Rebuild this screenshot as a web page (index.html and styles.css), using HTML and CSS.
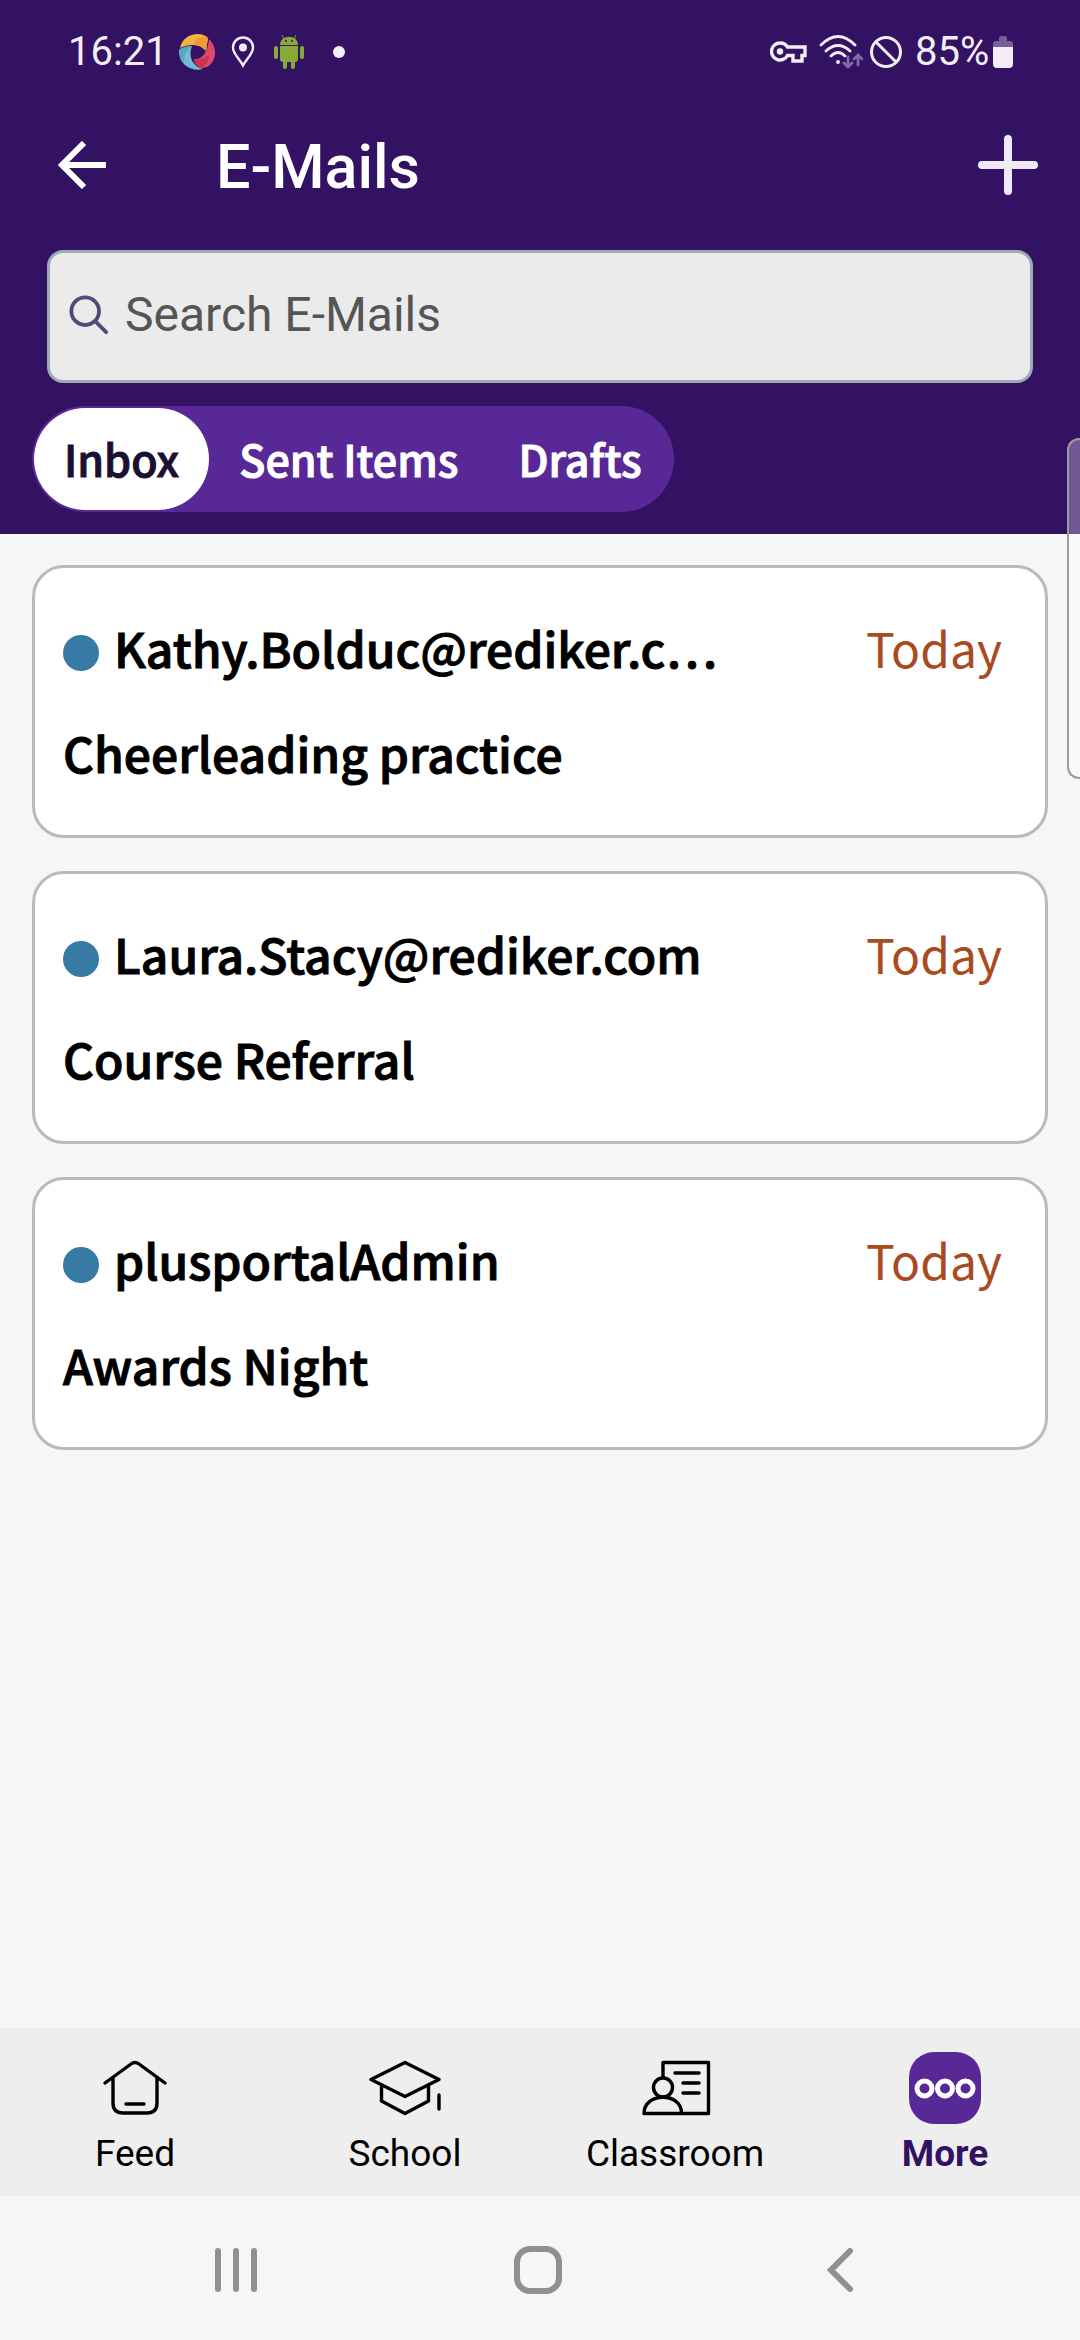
FILE: index.html
```html
<!DOCTYPE html>
<html lang="en">
<head>
<meta charset="utf-8">
<meta name="viewport" content="width=device-width, initial-scale=1">
<title>E-Mails</title>
<link rel="stylesheet" href="styles.css">
</head>
<body>
<header class="top">
  <div class="status">
    <div class="status-left">
      <span class="clock">16:21</span>
      <svg width="36" height="36" viewBox="0 0 36 36" aria-hidden="true">
        <path d="M1 14C3 5 10 0 19 0c4 0 7 1 10 4l-2 13C22 10 11 9 1 14z" fill="#f3b33d"/>
        <path d="M15 7c5-4 10-5 14-3l-2 13c-3-4-7-6-12-6z" fill="#ee9a35"/>
        <path d="M30 5c6 6 8 15 4 22-3 5-7 7-12 7-4-2-7-5-7-9 8 1 14-7 15-20z" fill="#df486b"/>
        <path d="M15 25c6 1 11-1 15-4 0 6-3 11-8 13-4-2-7-5-7-9z" fill="#c4354f"/>
        <path d="M13 12C9 22 13 32 24 35 13 38 1 31 0 19c0-2 0-3 1-4 4-2 8-3 12-3z" fill="#72bdd3"/>
        <path d="M13 12C9 15 5 21 5 28 1 24 0 20 1 15c4-2 8-3 12-3z" fill="#5aa6c1"/>
      </svg>
      <svg class="pin" width="24" height="32" viewBox="0 0 24 32" aria-hidden="true">
        <path d="M12 29.500C8 22 2 18 2 11.500a10 10 0 0 1 20 0C22 18 16 22 12 29.500z" fill="none" stroke="#f1eef5" stroke-width="2.400"/>
        <circle cx="12" cy="11.500" r="4" fill="#f1eef5"/>
      </svg>
      <svg class="droid" width="30" height="36" viewBox="0 0 30 36" aria-hidden="true" fill="#86aa35">
        <path d="M8 1l2 4M22 1l-2 4" stroke="#86aa35" stroke-width="1"/>
        <path d="M6 11C6 0 24 0 24 11z"/>
        <path d="M6 12h18v13q0 3-3 3H9q-3 0-3-3z"/>
        <rect x="0" y="12" width="4" height="13" rx="2"/><rect x="26" y="12" width="4" height="13" rx="2"/>
        <rect x="9" y="25" width="4" height="10" rx="2"/><rect x="17" y="25" width="4" height="10" rx="2"/>
        <circle cx="12" cy="7" r="1" fill="#331163"/><circle cx="18" cy="7" r="1" fill="#331163"/>
      </svg>
      <svg class="more-dot" width="12" height="12" viewBox="0 0 12 12" aria-hidden="true"><circle cx="6" cy="6" r="6" fill="#f1eef5"/></svg>
    </div>
    <div class="status-right">
      <svg width="37" height="22" viewBox="0 0 37 22" aria-hidden="true">
        <path d="M10 2a8.500 8.500 0 1 0 7.500 12.500H23V20h9v-5.500h3V6H17.500A8.500 8.500 0 0 0 10 2z" fill="none" stroke="#f1eef5" stroke-width="3.400"/>
        <circle cx="10" cy="10.500" r="3.200" fill="#f1eef5"/><path d="M18 9.700h14v2H28.500v5h-2.500v-5H18z" fill="#331163"/>
      </svg>
      <svg class="wifi" width="44" height="36" viewBox="0 0 44 36" fill="none" stroke="#f1eef5" stroke-width="2.800" stroke-linecap="round" aria-hidden="true">
        <path d="M2 11q17-17 34 0M7 17q12-11 24 0M12 22q7-7 14 0"/>
        <circle cx="19" cy="28" r="2" fill="#f1eef5" stroke="none"/>
        <path d="M29 23v10m-4-4l4 4 4-4M39 31V21m-4 4l4-4 4 4" stroke="#836aa2"/>
      </svg>
      <svg class="block" width="34" height="34" viewBox="0 0 34 34" fill="none" stroke="#f1eef5" stroke-width="3" aria-hidden="true"><circle cx="17" cy="17" r="14.500"/><path d="M7 7l20 20"/></svg>
      <span class="percent">85%</span>
      <svg width="20" height="32" viewBox="0 0 20 32" aria-hidden="true">
        <path d="M0 11V8q0-3 3-3h3V2q0-2 2-2h4q2 0 2 2v3h3q3 0 3 3v3z" fill="#775f98"/>
        <path d="M0 11h20v17q0 4-4 4H4q-4 0-4-4z" fill="#f1eef5"/>
      </svg>
    </div>
  </div>
  <div class="title-bar">
    <button class="icon-button" type="button" aria-label="Back">
      <svg width="48" height="48" viewBox="0 0 48 48" fill="none" stroke="#fff" stroke-width="6"><path d="M26 2L4 24l22 22M5 24h43"/></svg>
    </button>
    <h1 class="title">E-Mails</h1>
    <button class="icon-button" type="button" aria-label="New e-mail">
      <svg width="60" height="60" viewBox="0 0 60 60" stroke="#eeeaf7" stroke-width="8" stroke-linecap="round"><path d="M30 4v52M4 30h52"/></svg>
    </button>
  </div>
  <label class="search">
    <svg width="40" height="40" viewBox="0 0 42 42" fill="none" stroke="#54477a" stroke-width="4" stroke-linecap="round" aria-hidden="true"><circle cx="17" cy="17" r="14.500"/><path d="M28 28l11 11"/></svg>
    <input class="search-input" type="search" placeholder="Search E-Mails" aria-label="Search E-Mails">
  </label>
  <nav class="tabs" aria-label="Mailboxes">
    <button class="tab tab-active" type="button">Inbox</button>
    <button class="tab" type="button">Sent Items</button>
    <button class="tab" type="button">Drafts</button>
  </nav>
</header>
<main class="mails">
  <article class="mail">
    <div class="mail-head"><span class="unread"></span><h2 class="sender">Kathy.Bolduc@rediker.c…</h2><time class="date">Today</time></div>
    <p class="subject">Cheerleading practice</p>
  </article>
  <article class="mail">
    <div class="mail-head"><span class="unread"></span><h2 class="sender">Laura.Stacy@rediker.com</h2><time class="date">Today</time></div>
    <p class="subject">Course Referral</p>
  </article>
  <article class="mail">
    <div class="mail-head"><span class="unread"></span><h2 class="sender">plusportalAdmin</h2><time class="date">Today</time></div>
    <p class="subject">Awards Night</p>
  </article>
</main>
<div class="edge-handle"></div>
<nav class="bottom-nav" aria-label="Main">
  <a class="nav-item" href="#feed">
    <svg width="72" height="72" viewBox="0 0 72 72" fill="none" stroke="#000" stroke-width="3.400" stroke-linecap="round" stroke-linejoin="round"><path d="M6 31L32 12q4-3 8 0l26 19M14 26v25q0 10 10 10h24q10 0 10-10V26M27 52h18"/></svg>
    <span>Feed</span>
  </a>
  <a class="nav-item" href="#school">
    <svg width="72" height="72" viewBox="0 0 72 72" fill="none" stroke="#000" stroke-width="3.400" stroke-linecap="round" stroke-linejoin="round"><path d="M36 10.500l34 17-34 17-34-17zM12.500 33v16L36 61.500 59.500 49V33M70 43v14"/></svg>
    <span>School</span>
  </a>
  <a class="nav-item" href="#classroom">
    <svg width="72" height="72" viewBox="0 0 72 72" fill="none" stroke="#000" stroke-width="3.400" stroke-linecap="round" stroke-linejoin="round"><path d="M24 25V10.500h45.500v51H5C5 40 42.500 40 42.500 61M36 21h24M44 31h16M44 41h16"/><circle cx="24" cy="35.500" r="9.500"/></svg>
    <span>Classroom</span>
  </a>
  <a class="nav-item nav-current" href="#more" aria-current="page">
    <svg width="72" height="72" viewBox="0 0 72 72" fill="none" stroke="#fff" stroke-width="5"><rect width="72" height="72" rx="25" fill="#592897" stroke="none"/><circle cx="15.500" cy="36.500" r="7.500"/><circle cx="36" cy="36.500" r="7.500"/><circle cx="56.500" cy="36.500" r="7.500"/></svg>
    <span>More</span>
  </a>
</nav>
<footer class="system-nav">
  <button class="icon-button" type="button" aria-label="Recent apps"><svg width="48" height="48" viewBox="0 0 48 48" stroke="#909090" stroke-width="6" stroke-linecap="round"><path d="M6 5v38M24 5v38M42 5v38"/></svg></button>
  <button class="icon-button" type="button" aria-label="Home"><svg width="48" height="48" viewBox="0 0 48 48" fill="none" stroke="#909090" stroke-width="6"><rect x="3" y="3" width="42" height="42" rx="13"/></svg></button>
  <button class="icon-button" type="button" aria-label="System back"><svg width="48" height="48" viewBox="0 0 48 48" fill="none" stroke="#909090" stroke-width="6" stroke-linecap="round"><path d="M34 5L15 24l19 19"/></svg></button>
</footer>
</body>
</html>
```
FILE: styles.css
```css
* {
  box-sizing: border-box;
}

body {
  position: relative;
  display: flex;
  flex-direction: column;
  min-height: 100vh;
  margin: 0;
  background: #f6f6f6;
  color: #000;
  font-family: Roboto, sans-serif;
}

svg {
  display: block;
  flex: none;
}

h1, h2, p {
  margin: 0;
}

button {
  padding: 0;
  border: 0;
  background: none;
  font: inherit;
}

.top {
  padding-bottom: 22px;
  background: #331163;
  color: #fff;
}

.status {
  display: flex;
  justify-content: space-between;
  height: 104px;
  padding: 0 67px 0 68px;
  color: #f1eef5;
  font-size: 40px;
  line-height: 48px;
}

.status-left,
.status-right {
  display: flex;
  align-items: center;
}

.clock {
  width: 111px;
}

.pin {
  margin-left: 16px;
}

.droid {
  margin-left: 19px;
}

.more-dot {
  margin-left: 29px;
}

.wifi {
  margin-left: 12px;
}

.block {
  margin: 0 12px 0 6px;
}

.percent {
  width: 78px;
}

.title-bar {
  display: flex;
  align-items: center;
  height: 120px;
  padding: 2px 42px 0 58px;
}

.title {
  flex: 1;
  padding: 4px 0 0 110px;
  font-size: 61px;
  font-weight: 500;
  line-height: 72px;
}

.search {
  display: flex;
  align-items: center;
  gap: 16px;
  height: 133px;
  margin: 26px 47px 23px;
  padding: 0 19px 4px;
  border: 3px solid #9aabb7;
  border-radius: 16px;
  background: #ebebeb;
}

.search-input {
  flex: 1;
  min-width: 0;
  height: 64px;
  padding: 0;
  border: 0;
  outline: 0;
  background: none;
  color: #555;
  font: 48px/64px Roboto, sans-serif;
}

.search-input::placeholder {
  color: #555;
  opacity: 1;
}

.tabs {
  display: flex;
  width: fit-content;
  margin-left: 32px;
  padding: 2px;
  border-radius: 53px;
  background: #592897;
}

.tab {
  height: 102px;
  padding: 0 30px 2px;
  border-radius: 51px;
  color: #fff;
  font: 500 43px/64px "Noto Sans CJK KR", sans-serif;
}

.tab-active {
  background: #fff;
  color: #1b0f33;
}

.tab,
.sender,
.subject {
  -webkit-text-stroke: 1px currentColor;
}

.mails {
  display: grid;
  flex: 1;
  align-content: start;
  gap: 33px;
  padding: 31px 32px;
  font-family: "Noto Sans CJK KR", sans-serif;
  font-size: 48px;
  font-weight: 500;
  line-height: 60px;
}

.mail {
  padding: 49px 43px 53px 28px;
  border: 3px solid #bababa;
  border-radius: 32px;
  background: #fff;
}

.mail-head {
  display: flex;
  margin-bottom: 45px;
}

.unread {
  flex: none;
  width: 36px;
  height: 36px;
  margin: 18px 15px 0 0;
  border-radius: 50%;
  background: #377ba5;
}

.sender {
  flex: 1;
  min-width: 0;
  font-size: inherit;
  font-weight: 500;
}

.date {
  color: #aa4a1f;
  font-weight: 400;
}

.edge-handle {
  position: absolute;
  top: 438px;
  right: 0;
  width: 13px;
  height: 341px;
  border: 2px solid #9b9b9b;
  border-right: 0;
  border-radius: 12px 0 0 12px;
  background: rgba(255, 255, 255, 0.3);
}

.bottom-nav {
  display: grid;
  grid-template-columns: repeat(4, 1fr);
  height: 168px;
  padding-top: 24px;
  background: #eee;
}

.nav-item {
  display: flex;
  flex-direction: column;
  align-items: center;
  gap: 8px;
  color: #000;
  font-size: 37px;
  line-height: 44px;
  text-decoration: none;
}

.nav-current {
  color: #331163;
  font-weight: 700;
}

.system-nav {
  display: flex;
  align-items: center;
  justify-content: space-between;
  height: 144px;
  padding: 4px 216px 0 212px;
}
```
